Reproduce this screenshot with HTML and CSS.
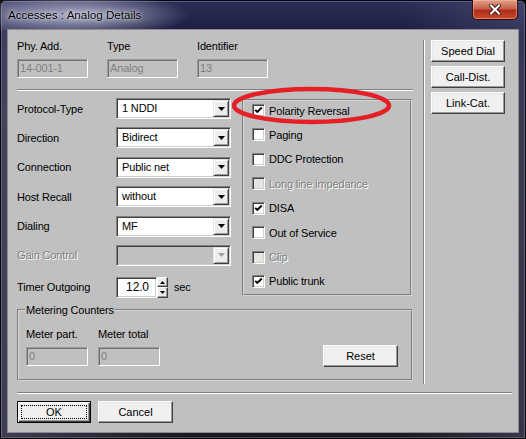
FILE: index.html
```html
<!DOCTYPE html>
<html>
<head>
<meta charset="utf-8">
<title>Accesses : Analog Details</title>
<link rel="stylesheet" href="styles.css">
</head>
<body>
<div class="window">
  <div class="titlebar">
    <span class="title">Accesses : Analog Details</span>
    <div class="close">
      <svg width="12" height="11" viewBox="0 0 12 11"><path d="M2 1.5 L10 9.5 M10 1.5 L2 9.5" stroke="#3a1a14" stroke-width="4" stroke-linecap="square"/><path d="M2 1.5 L10 9.5 M10 1.5 L2 9.5" stroke="#fff" stroke-width="2" stroke-linecap="square"/></svg>
    </div>
  </div>
  <div class="client">
    <div class="main">
      <div class="leftcol">
        <div class="ids">
          <div class="field"><div class="lbl">Phy. Add.</div><div class="edit dis">14-001-1</div></div>
          <div class="field"><div class="lbl">Type</div><div class="edit dis">Analog</div></div>
          <div class="field"><div class="lbl">Identifier</div><div class="edit dis">13</div></div>
        </div>
        <div class="hsep"></div>
        <div class="middle">
          <div class="params">
            <div class="prow"><span class="plbl">Protocol-Type</span><div class="combo"><span class="val">1 NDDI</span><span class="dd"><svg width="7" height="4" viewBox="0 0 7 4"><path d="M0 0H7L3.5 4Z" fill="#000"/></svg></span></div></div>
            <div class="prow"><span class="plbl">Direction</span><div class="combo"><span class="val">Bidirect</span><span class="dd"><svg width="7" height="4" viewBox="0 0 7 4"><path d="M0 0H7L3.5 4Z" fill="#000"/></svg></span></div></div>
            <div class="prow"><span class="plbl">Connection</span><div class="combo"><span class="val">Public net</span><span class="dd"><svg width="7" height="4" viewBox="0 0 7 4"><path d="M0 0H7L3.5 4Z" fill="#000"/></svg></span></div></div>
            <div class="prow"><span class="plbl">Host Recall</span><div class="combo"><span class="val">without</span><span class="dd"><svg width="7" height="4" viewBox="0 0 7 4"><path d="M0 0H7L3.5 4Z" fill="#000"/></svg></span></div></div>
            <div class="prow"><span class="plbl">Dialing</span><div class="combo"><span class="val">MF</span><span class="dd"><svg width="7" height="4" viewBox="0 0 7 4"><path d="M0 0H7L3.5 4Z" fill="#000"/></svg></span></div></div>
            <div class="prow"><span class="plbl dtext">Gain Control</span><div class="combo cdis"><span class="val"></span><span class="dd"><svg width="7" height="4" viewBox="0 0 7 4"><path d="M0 0H7L3.5 4Z" fill="#a0a0a0"/></svg></span></div></div>
            <div class="prow timer"><span class="plbl">Timer Outgoing</span>
              <div class="spin">
                <div class="spinedit">12.0</div>
                <div class="spinbtns">
                  <span class="sb"><svg width="5" height="3" viewBox="0 0 5 3"><path d="M2.5 0L5 3H0Z" fill="#000"/></svg></span>
                  <span class="sb"><svg width="5" height="3" viewBox="0 0 5 3"><path d="M0 0H5L2.5 3Z" fill="#000"/></svg></span>
                </div>
              </div>
              <span class="unit">sec</span>
            </div>
          </div>
          <div class="checks">
            <div class="chk"><span class="box"><svg width="9" height="9" viewBox="0 0 9 9"><path d="M1.2 3.8 L3.3 6 L7.8 1.5" stroke="#000" stroke-width="1.9" fill="none"/></svg></span><span>Polarity Reversal</span></div>
            <div class="chk"><span class="box"></span><span>Paging</span></div>
            <div class="chk"><span class="box"></span><span>DDC Protection</span></div>
            <div class="chk"><span class="box bdis"></span><span class="dtext">Long line impedance</span></div>
            <div class="chk"><span class="box"><svg width="9" height="9" viewBox="0 0 9 9"><path d="M1.2 3.8 L3.3 6 L7.8 1.5" stroke="#000" stroke-width="1.9" fill="none"/></svg></span><span>DISA</span></div>
            <div class="chk"><span class="box"></span><span>Out of Service</span></div>
            <div class="chk"><span class="box bdis"></span><span class="dtext">Clip</span></div>
            <div class="chk"><span class="box"><svg width="9" height="9" viewBox="0 0 9 9"><path d="M1.2 3.8 L3.3 6 L7.8 1.5" stroke="#000" stroke-width="1.9" fill="none"/></svg></span><span>Public trunk</span></div>
          </div>
        </div>
        <fieldset class="meter">
          <legend>Metering Counters</legend>
          <div class="mrow">
            <div class="field"><div class="lbl">Meter part.</div><div class="edit dis small">0</div></div>
            <div class="field"><div class="lbl">Meter total</div><div class="edit dis small">0</div></div>
            <button class="btn reset">Reset</button>
          </div>
        </fieldset>
      </div>
      <div class="vsep"></div>
      <div class="rightcol">
        <button class="btn side">Speed Dial</button>
        <button class="btn side">Call-Dist.</button>
        <button class="btn side">Link-Cat.</button>
      </div>
    </div>
    <div class="hsep bottomsep"></div>
    <div class="actions">
      <button class="btn def"><span class="focus">OK</span></button>
      <button class="btn cancel">Cancel</button>
    </div>
  </div>
  <svg class="mark" width="164" height="42" viewBox="0 0 164 42"><ellipse cx="81.5" cy="20.5" rx="77.5" ry="16.5" fill="none" stroke="#e51f26" stroke-width="4.5"/></svg>
</div>
</body>
</html>
```
FILE: styles.css
```css
* { box-sizing: border-box; }
html, body { margin: 0; padding: 0; background: #000; }
body {
  width: 526px; height: 439px; overflow: hidden;
  font-family: "Liberation Sans", Arial, sans-serif;
  font-size: 11px; color: #000;
  letter-spacing: -0.15px;
}
.window {
  position: relative;
  width: 526px; height: 439px;
  display: flex; flex-direction: column;
  border-radius: 6px 6px 0 0;
  background:
    linear-gradient(to right, rgba(130,130,170,.35), rgba(0,0,0,0) 35%, rgba(0,0,0,0) 75%, rgba(120,120,160,.3)),
    linear-gradient(to bottom, #2c2e58 0, #1a1b3c 35px, #23232e 120px, #1a1a20 100%);
  box-shadow: inset 0 0 0 1px #08080c, inset 0 0 0 2px rgba(170,170,200,.35);
}
.titlebar {
  height: 30px; flex: none;
  display: flex; align-items: flex-start;
  padding-left: 8px;
  background: radial-gradient(ellipse 115px 22px at 76px 15px, rgba(200,200,225,.8), rgba(200,200,225,0));
}
.title {
  margin-top: 8px;
  font-size: 11.6px; line-height: 14px;
  letter-spacing: 0;
  color: #000;
  text-shadow: 0 0 6px rgba(255,255,255,.9), 0 0 2px rgba(255,255,255,.7);
}
.close {
  margin-left: auto; margin-right: 8px;
  width: 46px; height: 20px;
  display: flex; align-items: center; justify-content: center;
  border: 1px solid #3a0c08; border-top: none;
  border-radius: 0 0 5px 5px;
  background: linear-gradient(to bottom, #e0a08c 0, #c8604a 45%, #b02c18 55%, #c84a2c 100%);
  box-shadow: inset 0 0 0 1px rgba(255,190,170,.5);
}
.client {
  flex: 1;
  margin: 0 8px 7px;
  background: #c0c0c0;
  padding: 10px 13px 9px 9px;
  display: flex; flex-direction: column;
  box-shadow: 0 0 0 1px #8a8a98;
}
.main { display: flex; height: 344px; flex: none; }
.leftcol { width: 396px; display: flex; flex-direction: column; }
.ids { display: flex; gap: 19px; }
.field { display: flex; flex-direction: column; }
.lbl { line-height: 13px; margin-bottom: 6px; white-space: nowrap; }
.edit {
  width: 71px; height: 19px;
  border: 1px solid; border-color: #9a9a9a #fff #fff #9a9a9a;
  box-shadow: inset 1px 1px #707070;
  padding: 0 0 0 2px;
  line-height: 16px;
  background: #fff;
}
.edit.dis { background: #c0c0c0; color: #808080; }
.edit.small { width: 62px; }
.hsep {
  height: 2px; flex: none;
  border-top: 1px solid #808080; border-bottom: 1px solid #fff;
  margin-top: 11px;
}
.middle { display: flex; align-items: flex-start; margin-top: 7px; }
.params { width: 214px; display: flex; flex-direction: column; }
.prow { display: flex; align-items: center; height: 21px; margin-top: 8.4px; }
.prow:first-child { margin-top: 0; }
.prow.timer { margin-top: 11px; }
.plbl { width: 99px; flex: none; white-space: nowrap; }
.dtext { color: #808080; text-shadow: 1px 1px 0 #fff; }
.combo {
  width: 115px; height: 21px;
  display: flex;
  background: #fff;
  border: 1px solid; border-color: #808080 #fff #fff #808080;
  box-shadow: inset 1px 1px #404040, inset -1px -1px #d4d0c8;
  padding: 1px;
}
.combo .val { flex: 1; padding-left: 4px; line-height: 17px; white-space: nowrap; }
.combo .dd {
  width: 16px; height: 17px; flex: none;
  display: flex; align-items: center; justify-content: center;
  background: #ececec;
  border: 1px solid; border-color: #e3e3e3 #404040 #404040 #e3e3e3;
  box-shadow: inset 1px 1px #fff, inset -1px -1px #9a9a9a;
}
.combo.cdis { background: #c0c0c0; }
.spin { display: flex; height: 21px; }
.spinedit {
  width: 41px; height: 21px;
  background: #fff;
  border: 1px solid; border-color: #808080 #fff #fff #808080;
  box-shadow: inset 1px 1px #404040, inset -1px -1px #d4d0c8;
  font-size: 12px; line-height: 19px; text-align: center;
  padding-left: 2px;
}
.spinbtns { width: 11px; display: flex; flex-direction: column; }
.sb {
  flex: 1;
  display: flex; align-items: center; justify-content: center;
  background: #ececec;
  border: 1px solid; border-color: #fff #404040 #404040 #fff;
  box-shadow: inset -1px -1px #9a9a9a;
}
.unit { margin-left: 6px; }
.checks {
  width: 170px; height: 197px;
  margin: 1px 0 0 11px;
  border: 2px groove #d4d4d4;
  padding: 3px 0 0 8px;
  display: flex; flex-direction: column; gap: 11.43px;
}
.chk { display: flex; align-items: center; height: 13px; gap: 4px; white-space: nowrap; }
.box {
  width: 13px; height: 13px; flex: none;
  background: #fff;
  border: 1px solid; border-color: #808080 #fff #fff #808080;
  box-shadow: inset 1px 1px #404040, inset -1px -1px #d4d0c8;
  display: flex; align-items: center; justify-content: center;
}
.box.bdis { background: #e4e4e4; }
.meter {
  margin: 6px 0 0 0;
  padding: 11px 13px 13px 7px;
  border: 2px groove #d4d4d4;
  min-width: 0;
}
.meter legend { padding: 0 1px; margin-left: -1px; line-height: 13px; }
.mrow { display: flex; align-items: flex-end; gap: 10px; }
.btn {
  font: inherit; color: #000;
  height: 22px; padding: 0;
  background: #f0f0f0;
  border: 1px solid; border-color: #fff #404040 #404040 #fff;
  box-shadow: inset -1px -1px #9a9a9a, inset 1px 1px #e8e8e8;
}
.reset { margin-left: auto; width: 75px; margin-bottom: -1px; }
.vsep {
  width: 2px; margin-left: 10px; flex: none;
  border-left: 1px solid #808080; border-right: 1px solid #fff;
}
.rightcol { margin-left: 6px; width: 74px; display: flex; flex-direction: column; gap: 4px; }
.side { width: 74px; }
.bottomsep { margin-top: 8px; margin-right: -7px; }
.actions { display: flex; gap: 7px; margin-top: 7px; }
.def {
  width: 74px;
  border: 1px solid #000;
  box-shadow: inset 1px 1px #fff, inset -1px -1px #404040, inset -2px -2px #9a9a9a;
  display: flex; padding: 3px;
}
.def .focus {
  flex: 1;
  border: 1px dotted #000;
  display: flex; align-items: center; justify-content: center;
  line-height: 13px;
}
.cancel { width: 75px; }
.mark { position: absolute; left: 230px; top: 85px; pointer-events: none; }
```
